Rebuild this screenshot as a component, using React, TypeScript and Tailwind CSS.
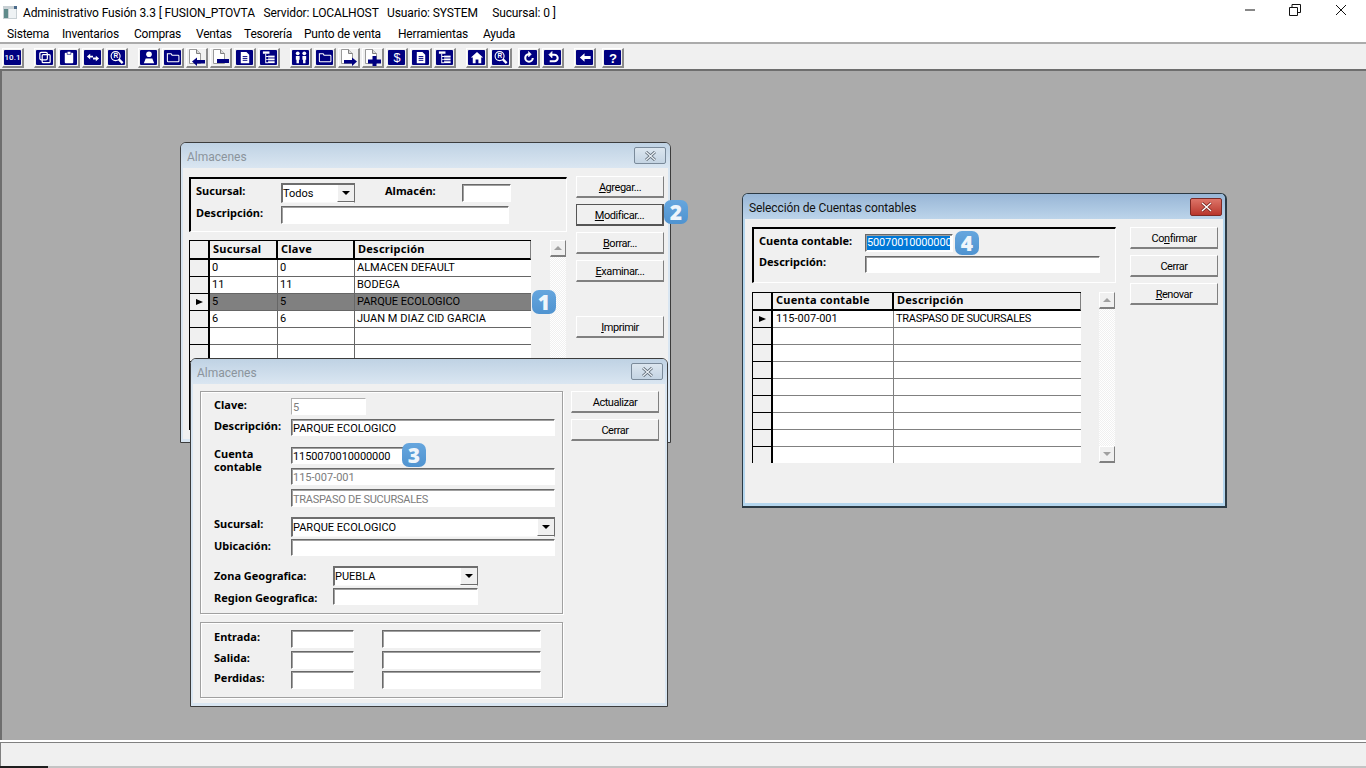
import React from "react";

// ─── Toolbar glyphs ─────────────────────────────────────────────────────────

const W = "#ffffff";
const N = "#000080";

function Page({ children }: { children?: React.ReactNode }) {
  return (
    <svg width="19" height="17" viewBox="0 0 19 17">
      <path d="M2.500 .5h7l4 4v10h-11z" fill="#fff" stroke="#9a9a9a" strokeWidth="1" />
      <path d="M9.500 .5v4h4" fill="#d8d8d8" stroke="#808080" />
      {children}
    </svg>
  );
}

const glyphs: Record<string, React.ReactNode> = {
  copy: (
    <g fill="none" stroke={W} strokeWidth="1.3">
      <rect x="2.500" y="2.500" width="8" height="8" rx="1.500" />
      <rect x="5" y="5" width="8.500" height="8.500" rx="1" />
    </g>
  ),
  clip: (
    <g fill={W}>
      <rect x="3.500" y="3" width="9" height="11" rx="1" />
      <rect x="6" y="1.500" width="4" height="3" fill={W} stroke={N} strokeWidth="0.6" />
    </g>
  ),
  swap: <path d="M1.500 7l3.500-3v2h3v2H5v2zM14.500 9l-3.500-3v2H8v2h3v2z" fill={W} />,
  search: (
    <g>
      <circle cx="6.500" cy="6.500" r="4.800" fill="none" stroke={W} strokeWidth="1.200" />
      <text x="4.300" y="9" fontSize="7" fontWeight="700" fill={W} fontFamily="Liberation Sans">R</text>
      <path d="M10 10l4 4" stroke={W} strokeWidth="2.400" />
    </g>
  ),
  person: (
    <g fill={W}>
      <circle cx="8" cy="4.500" r="3" />
      <path d="M2.500 14l2-5h7l2 5z" />
    </g>
  ),
  folder: <path d="M2 5.500V4h4l1 1.500h6.500a.8.8 0 01.8.8v5.400a.8.8 0 01-.8.8H2.800a.8.8 0 01-.8-.8z" fill="none" stroke={W} strokeWidth="1.100" />,
  doc: (
    <g>
      <path d="M3.500 2h6l3 3v9h-9z" fill={W} />
      <path d="M5.500 7h5M5.500 9h5M5.500 11h5" stroke={N} strokeWidth="1" />
    </g>
  ),
  tree: (
    <g fill={W}>
      <rect x="1.500" y="1.500" width="7" height="2.500" />
      <rect x="7" y="6" width="7" height="2" />
      <rect x="7" y="9" width="7" height="2" />
      <rect x="7" y="12" width="7" height="2" />
      <path d="M4 4h1v9h2v1H4zM5 6.500h2v1H5zM5 9.500h2v1H5z" />
    </g>
  ),
  people: (
    <g fill={W}>
      <circle cx="4.500" cy="3.500" r="2" />
      <circle cx="11.500" cy="3.500" r="2" />
      <path d="M2.500 6.500h4v4h-.7V14H3.200v-3.500h-.7zM9.500 6.500h4v4h-.7V14h-2.600v-3.500h-.7z" />
    </g>
  ),
  dollar: (
    <text x="8" y="13" textAnchor="middle" fontSize="13.500" fill={W} fontFamily="Liberation Sans">$</text>
  ),
  home: <path d="M8 2l6.500 6H12.500v6H9.500v-4h-3v4H3.500V8H1.500z" fill={W} />,
  redo: (
    <g fill="none" stroke={W} strokeWidth="2.200">
      <path d="M8 4.500a4 4 0 104 4" />
      <path d="M7.500 1.500v6l3-3z" fill={W} strokeWidth="0.6" />
    </g>
  ),
  undo: (
    <g fill="none" stroke={W} strokeWidth="2.200">
      <path d="M6 5h3.500a3.200 3.200 0 010 7H4.500" />
      <path d="M7 1.500v7l-3.500-3.500z" fill={W} strokeWidth="0.6" />
    </g>
  ),
  back: <path d="M2.500 8l5-4.500V6.500h6.500v3H7.500v3z" fill={W} />,
  help: (
    <text x="8" y="13.500" textAnchor="middle" fontSize="14" fontWeight="700" fill={W} fontFamily="Liberation Sans">?</text>
  ),
};

function ToolBtn({ icon }: { icon: string }) {
  return (
    <div className="flex h-[20px] w-[22px] items-center justify-center border-t border-l border-t-white border-l-white border-b-2 border-r-2 border-b-[#8a8a8a] border-r-[#8a8a8a]">
      {icon === "ten" ? (
        <span className="flex h-[15px] w-[17px] items-center justify-center rounded-[1px] bg-[#000080] text-[8px] font-medium leading-none text-white">10.1</span>
      ) : icon.startsWith("page") ? (
        <Page>
          {icon === "pageLeft" && <path d="M5 12.500l5-4v2.500h8v3.500h-8V17z" fill={N} />}
          {icon === "pageMinus" && <rect x="6" y="10" width="12" height="4" fill={N} />}
          {icon === "pageRight" && <path d="M18 12.500l-5-4v2.500H5v3.500h8V17z" fill={N} />}
          {icon === "pagePlus" && <path d="M9.500 7h4v3.500H18v4h-4.500V17h-4v-2.500H5v-4h4.500z" fill={N} />}
        </Page>
      ) : (
        <span className="flex h-[15px] w-[17px] items-center justify-center rounded-[1px] bg-[#000080]">
          <svg width="16" height="15" viewBox="0 0 16 16">{glyphs[icon]}</svg>
        </span>
      )}
    </div>
  );
}

function ToolGroup({ icons, className }: { icons: string[]; className: string }) {
  return (
    <div className={`flex gap-[2px] ${className}`}>
      {icons.map((ic, i) => (
        <ToolBtn key={i} icon={ic} />
      ))}
    </div>
  );
}

// ─── Win32 controls ─────────────────────────────────────────────────────────

function Field({ className, text, muted }: { className: string; text?: string; muted?: boolean }) {
  return (
    <div className={`overflow-hidden whitespace-nowrap border border-t-[#696969] border-l-[#696969] border-b-white border-r-white bg-white pl-[1px] pt-[1px] text-[11px] leading-[16px] shadow-[inset_1px_1px_0_#a0a0a0] ${muted ? "text-[#7c7c7c]" : "text-black"} ${className}`}>
      {text}
    </div>
  );
}

function Arrow() {
  return <span className="h-0 w-0 border-x-[4px] border-t-[4px] border-x-transparent border-t-black" />;
}

function Combo({ className, text }: { className: string; text: string }) {
  return (
    <div className={`flex items-stretch justify-between border-t-2 border-l-2 border-b border-r border-t-[#6e6e6e] border-l-[#6e6e6e] border-b-[#f8f8f8] border-r-[#6e6e6e] bg-white text-[11px] leading-[17px] ${className}`}>
      <span>{text}</span>
      <span className="flex w-[17px] items-center justify-center border-l border-l-white border-b border-b-[#6e6e6e] bg-[#f0f0f0]">
        <Arrow />
      </span>
    </div>
  );
}

function Btn({ children, dflt, className = "" }: { children: React.ReactNode; dflt?: boolean; className?: string }) {
  return (
    <div className={`flex h-[22px] w-[88px] items-center justify-center bg-[#f0f0f0] pt-[2px] text-[11px] leading-none tracking-[-0.45px] text-black ${dflt ? "border border-[#555] border-b-2 border-r-2" : "border-t border-l border-t-white border-l-white border-b-2 border-r border-b-[#808080] border-r-[#808080]"} ${className}`}>
      <span>{children}</span>
    </div>
  );
}

function Label({ children, className = "" }: { children: React.ReactNode; className?: string }) {
  return (
    <div className={`shrink-0 font-['Noto_Sans'] text-[11px] font-bold leading-[14px] text-black ${className}`}>
      {children}
    </div>
  );
}

function Badge({ n, className }: { n: string; className: string }) {
  return (
    <div className={`absolute flex h-[24px] w-[24px] items-center justify-center rounded-[7px] bg-gradient-to-b from-[#66a6de] to-[#4f93d0] font-['Open_Sans'] text-[21px] font-extrabold leading-none text-[#eef5fb] ${className}`}>
      {n}
    </div>
  );
}

function XIcon({ edge, fill }: { edge: string; fill: string }) {
  return (
    <svg width="13" height="10" viewBox="0 0 13 10">
      <path d="M2 1l9 8M11 1l-9 8" stroke={edge} strokeWidth="3" fill="none" />
      <path d="M2 1l9 8M11 1l-9 8" stroke={fill} strokeWidth="1.300" fill="none" />
    </svg>
  );
}

function Win({ className, title, active, closeClass, children }: {
  className: string;
  title: string;
  active?: boolean;
  closeClass: string;
  children: React.ReactNode;
}) {
  return (
    <div className={`absolute flex flex-col overflow-hidden rounded-t-[6px] border border-[#3c3c3c] ${active ? "bg-[#b4d6ee]" : "bg-[#d9e6f2]"} ${className}`}>
      <div className={`flex shrink-0 items-center justify-between pl-[6px] text-[12px] ${active ? "h-[25px] bg-gradient-to-b from-[#98b6d6] to-[#bcd4ea] text-[#111]" : "h-[25px] bg-gradient-to-b from-[#bfd2e4] to-[#dae6f1] text-[#8b949c]"}`}>
        <span className={`pt-[2px] ${active ? "tracking-[-0.1px]" : ""}`}>{title}</span>
        {active ? (
          <span className={`flex items-center justify-center rounded-[2px] border border-[#7c2a25] bg-gradient-to-b from-[#dd7468] to-[#b8352c] ${closeClass}`}>
            <XIcon edge="#7c2a25" fill="#ffffff" />
          </span>
        ) : (
          <span className={`flex items-center justify-center rounded-[2px] border border-[#7a8a9a] bg-gradient-to-b from-[#dce6ef] to-[#c4d4e3] ${closeClass}`}>
            <XIcon edge="#5f6b76" fill="#e8eef4" />
          </span>
        )}
      </div>
      <div className="mx-[2px] mb-[3px] flex flex-1 overflow-hidden bg-[#f0f0f0] text-black">{children}</div>
    </div>
  );
}

// ─── Grid ───────────────────────────────────────────────────────────────────

function Grid({ cols, widthClass, headH, headLeading, cellLeading, head, rows, total, selected, marker, lineClass, firstPad }: {
  cols: string;
  widthClass: string;
  headH: string;
  headLeading: string;
  cellLeading: string;
  head: string[];
  rows: React.ReactNode[][];
  total: number;
  selected?: number;
  marker: number;
  lineClass: string;
  firstPad?: boolean;
}) {
  return (
    <div className={`shrink-0 border-l border-black ${widthClass}`}>
      <div className={`grid border-t border-black ${cols} ${headH}`}>
        <div className="border-r-2 border-b-2 border-black bg-[#f0f0f0]" />
        {head.map((h, c) => (
          <div key={h} className={`border-b-2 border-black bg-[#f0f0f0] pl-[3px] font-['Noto_Sans'] text-[11px] font-bold tracking-[0.25px] ${headLeading} ${c === head.length - 1 ? "border-r border-r-[#808080]" : "border-r-2"}`}>
            {h}
          </div>
        ))}
      </div>
      {Array.from({ length: total }).map((_, r) => (
        <div key={r} className={`grid h-[17px] ${cols}`}>
          <div className="flex items-center justify-center border-r-2 border-b border-black bg-[#f0f0f0]">
            {r === marker && <span className="h-0 w-0 border-y-[3px] border-l-[7px] border-y-transparent border-l-black" />}
          </div>
          {head.map((_, c) => (
            <div key={c} className={`overflow-hidden whitespace-nowrap border-b text-[11px] ${cellLeading} ${c === 0 && firstPad ? "pl-[3px]" : "pl-[2px]"} ${c === head.length - 1 ? "" : "border-r"} ${lineClass} ${r === selected ? "bg-[#808080]" : "bg-white"}`}>
              {rows[r]?.[c]}
            </div>
          ))}
        </div>
      ))}
    </div>
  );
}

function ScrollBtn({ down }: { down?: boolean }) {
  return (
    <div className="flex h-[17px] w-[16px] items-center justify-center border-t border-l border-t-white border-l-white border-b-2 border-r border-b-[#808080] border-r-[#808080] bg-[#f0f0f0]">
      <span className={`h-0 w-0 border-x-[4px] border-x-transparent ${down ? "border-t-[4px] border-t-[#a0a0a0]" : "border-b-[4px] border-b-[#a0a0a0]"}`} />
    </div>
  );
}

function ScrollBar({ className }: { className: string }) {
  return (
    <div className={`flex w-[16px] shrink-0 flex-col justify-between bg-[repeating-conic-gradient(#f0f0f0_0_25%,#ffffff_0_50%)] bg-[length:2px_2px] ${className}`}>
      <ScrollBtn />
      <ScrollBtn down />
    </div>
  );
}

const etched = "border border-[#a0a0a0] shadow-[1px_1px_0_#fff,inset_1px_1px_0_#fff]";
const sunken = "border-t-2 border-l-2 border-b border-r border-t-black border-l-black border-b-white border-r-white";

// ─── Windows ────────────────────────────────────────────────────────────────

function AlmacenesList() {
  return (
    <Win className="left-[180px] top-[73px] h-[301px] w-[491px]" title="Almacenes" closeClass="mr-[4px] h-[17px] w-[32px]">
      <div className="ml-[6px] w-[378px] shrink-0 pt-[9px]">
        <div className={`h-[55px] ${sunken} pl-[5px] pt-[4px]`}>
          <div className="flex">
            <Label className="mt-[1px] w-[85px]">Sucursal:</Label>
            <Combo className="h-[20px] w-[74px]" text="Todos" />
            <Label className="ml-[30px] mt-[1px] w-[77px]">Almacén:</Label>
            <Field className="mt-[1px] h-[18px] w-[49px]" />
          </div>
          <div className="mt-[3px] flex">
            <Label className="w-[85px]">Descripción:</Label>
            <Field className="h-[18px] w-[228px]" />
          </div>
        </div>
        <div className="mt-[8px] flex">
          <Grid
            cols="grid-cols-[20px_68px_77px_176px]"
            widthClass="w-[342px]"
            headH="h-[20px]"
            headLeading="leading-[15px]"
            cellLeading="leading-[15px]"
            head={["Sucursal", "Clave", "Descripción"]}
            rows={[
              ["0", "0", "ALMACEN DEFAULT"],
              ["11", "11", "BODEGA"],
              ["5", "5", "PARQUE ECOLOGICO"],
              ["6", "6", "JUAN M DIAZ CID GARCIA"],
            ]}
            total={10}
            selected={2}
            marker={2}
            lineClass="border-[#666]"
          />
          <ScrollBar className="ml-[19px] h-[188px]" />
        </div>
      </div>
      <div className="ml-[9px] flex flex-col pt-[8px]">
        <Btn><u>A</u>gregar...</Btn>
        <Btn dflt className="mt-[6px]"><u>M</u>odificar...</Btn>
        <Btn className="mt-[6px]"><u>B</u>orrar...</Btn>
        <Btn className="mt-[6px]"><u>E</u>xaminar...</Btn>
        <Btn className="mt-[34px]"><u>I</u>mprimir</Btn>
      </div>
    </Win>
  );
}

function AlmacenesForm() {
  return (
    <Win className="left-[190px] top-[289px] h-[349px] w-[478px]" title="Almacenes" closeClass="mr-[4px] h-[17px] w-[32px]">
      <div className="ml-[7px] w-[363px] shrink-0 pt-[7px]">
        <div className={`h-[223px] ${etched} pl-[13px] pt-[6px]`}>
          <div className="flex h-[17px]">
            <Label className="w-[77px]">Clave:</Label>
            <Field muted className="h-[17px] w-[75px] !border-t-[#b0b0b0] !border-l-[#b0b0b0] !shadow-none" text="5" />
          </div>
          <div className="mt-[4px] flex h-[17px]">
            <Label className="w-[77px]">Descripción:</Label>
            <Field className="h-[17px] w-[264px]" text="PARQUE ECOLOGICO" />
          </div>
          <div className="mt-[11px] flex h-[17px]">
            <Label className="w-[77px] !leading-[13px]">Cuenta<br />contable</Label>
            <Field className="h-[17px] w-[114px] tracking-[-0.1px]" text="1150070010000000" />
          </div>
          <div className="mt-[4px] flex h-[17px]">
            <div className="w-[77px]" />
            <Field muted className="h-[17px] w-[264px]" text="115-007-001" />
          </div>
          <div className="mt-[4px] flex h-[18px]">
            <div className="w-[77px]" />
            <Field muted className="h-[18px] w-[264px] tracking-[-0.25px] !leading-[17px]" text="TRASPASO DE SUCURSALES" />
          </div>
          <div className="mt-[10px] flex h-[20px]">
            <Label className="w-[77px]">Sucursal:</Label>
            <Combo className="h-[20px] w-[264px]" text="PARQUE ECOLOGICO" />
          </div>
          <div className="mt-[2px] flex h-[17px]">
            <Label className="w-[77px]">Ubicación:</Label>
            <Field className="h-[17px] w-[264px]" />
          </div>
          <div className="mt-[10px] flex h-[20px]">
            <Label className="mt-[3px] w-[119px]">Zona Geografica:</Label>
            <Combo className="h-[20px] w-[145px]" text="PUEBLA" />
          </div>
          <div className="mt-[2px] flex h-[17px]">
            <Label className="mt-[3px] w-[119px]">Region Geografica:</Label>
            <Field className="h-[17px] w-[145px]" />
          </div>
        </div>
        <div className={`mt-[8px] h-[76px] ${etched} pl-[13px] pt-[7px]`}>
          <div className="flex h-[18px]">
            <Label className="w-[77px]">Entrada:</Label>
            <Field className="h-[18px] w-[63px]" />
            <Field className="ml-[28px] h-[18px] w-[159px]" />
          </div>
          <div className="mt-[3px] flex h-[18px]">
            <Label className="w-[77px]">Salida:</Label>
            <Field className="h-[18px] w-[63px]" />
            <Field className="ml-[28px] h-[18px] w-[159px]" />
          </div>
          <div className="mt-[2px] flex h-[18px]">
            <Label className="w-[77px]">Perdidas:</Label>
            <Field className="h-[18px] w-[63px]" />
            <Field className="ml-[28px] h-[18px] w-[159px]" />
          </div>
        </div>
      </div>
      <div className="ml-[8px] flex flex-col pt-[7px]">
        <Btn>Actualizar</Btn>
        <Btn className="mt-[6px]">Cerrar</Btn>
      </div>
    </Win>
  );
}

function CuentasWin() {
  return (
    <Win active className="left-[742px] top-[124px] h-[315px] w-[485px] !border-[#2c3a44] border-b-2 border-r-2" title="Selección de Cuentas contables" closeClass="mr-[3px] h-[18px] w-[32px]">
      <div className="ml-[7px] w-[364px] shrink-0 pt-[8px]">
        <div className={`h-[56px] ${sunken} pl-[5px] pt-[5px]`}>
          <div className="flex h-[18px]">
            <Label className="w-[106px]">Cuenta contable:</Label>
            <div className="h-[18px] w-[88px] overflow-hidden whitespace-nowrap border border-t-[#696969] border-l-[#696969] border-b-white border-r-white bg-white pl-[1px] pt-[1px] pr-[2px] text-[11px] leading-[14px] shadow-[inset_1px_1px_0_#a0a0a0]">
              <span className="block overflow-hidden bg-[#0078d7] tracking-[-0.15px] text-white">5007001000000000</span>
            </div>
          </div>
          <div className="mt-[4px] flex h-[17px]">
            <Label className="-mt-[1px] w-[106px]">Descripción:</Label>
            <Field className="h-[17px] w-[235px]" />
          </div>
        </div>
        <div className="mt-[9px] flex">
          <Grid
            cols="grid-cols-[20px_121px_187px]"
            widthClass="h-[171px] w-[329px] overflow-hidden"
            headH="h-[19px]"
            headLeading="leading-[14px]"
            cellLeading="leading-[15px]"
            head={["Cuenta contable", "Descripción"]}
            rows={[["115-007-001", <span className="tracking-[-0.25px]">TRASPASO DE SUCURSALES</span>]]}
            total={9}
            marker={0}
            lineClass="border-[#808080]"
            firstPad
          />
          <ScrollBar className="ml-[18px] h-[171px]" />
        </div>
      </div>
      <div className="ml-[14px] flex flex-col pt-[8px]">
        <Btn>Co<u>n</u>firmar</Btn>
        <Btn className="mt-[6px]">Cerrar</Btn>
        <Btn className="mt-[6px]"><u>R</u>enovar</Btn>
      </div>
    </Win>
  );
}

// ─── App ────────────────────────────────────────────────────────────────────

const menus = [
  { label: "Sistema", width: "w-[41px]" },
  { label: "Inventarios", width: "w-[58px]" },
  { label: "Compras", width: "w-[48px]" },
  { label: "Ventas", width: "w-[34px]" },
  { label: "Tesorería", width: "w-[46px]" },
  { label: "Punto de venta", width: "w-[80px]" },
  { label: "Herramientas", width: "w-[71px]" },
  { label: "Ayuda", width: "w-[34px]" },
];

export default function App() {
  return (
    <div className="flex h-[768px] w-[1366px] flex-col overflow-hidden bg-white font-['Roboto',sans-serif] text-black">
      {/* title bar */}
      <div className="flex h-[25px] shrink-0 items-center pl-[3px] text-[12px]">
        <svg width="14" height="13" viewBox="0 0 14 13" className="mr-[6px]">
          <rect width="14" height="13" fill="#c8d0d4" />
          <rect x="1" y="3" width="4" height="9" fill="#5f8a8a" />
          <rect x="6" y="3" width="7" height="9" fill="#eef2f4" />
          <rect x="11" y="0" width="3" height="3" fill="#4a6a8a" />
        </svg>
        <span className="whitespace-pre tracking-[-0.12px]">Administrativo Fusión 3.3 [ FUSION_PTOVTA   Servidor: LOCALHOST   Usuario: SYSTEM     Sucursal: 0 ]</span>
        <div className="-mt-[5px] ml-auto flex items-center">
          <svg width="12" height="12" viewBox="0 0 12 12" className="mr-[33px]"><path d="M1 6h10" stroke="#111" /></svg>
          <svg width="12" height="12" viewBox="0 0 12 12" className="mr-[34px]"><path d="M.5 3.500h8v8h-8zM3 3V.5h8.500v8H9" fill="none" stroke="#111" /></svg>
          <svg width="12" height="12" viewBox="0 0 12 12" className="mr-[19px]"><path d="M1 1l10 10M11 1L1 11" stroke="#111" /></svg>
        </div>
      </div>
      {/* menu */}
      <div className="flex h-[17px] shrink-0 items-center gap-[14px] pl-[7px] text-[12px]">
        {menus.map((m) => (
          <span key={m.label} className={`whitespace-nowrap tracking-[-0.2px] ${m.width}`}>{m.label}</span>
        ))}
      </div>
      {/* toolbar */}
      <div className="h-[2px] shrink-0 bg-[#ababab]" />
      <div className="flex h-[25px] shrink-0 bg-[#f0f0f0] pl-[2px] pt-[4px]">
        <ToolGroup className="" icons={["ten"]} />
        <ToolGroup className="ml-[10px]" icons={["copy", "clip", "swap", "search"]} />
        <ToolGroup className="ml-[10px]" icons={["person", "folder", "pageLeft", "pageMinus", "doc", "tree"]} />
        <ToolGroup className="ml-[10px]" icons={["people", "folder", "pageRight", "pagePlus", "dollar", "doc", "tree"]} />
        <ToolGroup className="ml-[10px]" icons={["home", "search"]} />
        <ToolGroup className="ml-[6px]" icons={["redo", "undo"]} />
        <ToolGroup className="ml-[10px]" icons={["back"]} />
        <ToolGroup className="ml-[6px]" icons={["help"]} />
      </div>
      {/* MDI area */}
      <div className="relative h-[671px] shrink-0 bg-[#ababab] shadow-[inset_2px_2px_0_#6e6e6e]">
        <AlmacenesList />
        <AlmacenesForm />
        <CuentasWin />
        <Badge n="1" className="left-[532px] top-[221px]" />
        <Badge n="2" className="left-[664px] top-[131px]" />
        <Badge n="3" className="left-[402px] top-[374px]" />
        <Badge n="4" className="left-[955px] top-[162px]" />
      </div>
      {/* status bar */}
      <div className="h-[2px] shrink-0 bg-white" />
      <div className="h-[24px] shrink-0 border-t border-l border-[#808080] bg-[#f0f0f0]" />
      <div className="flex flex-1">
        <div className="w-[48px] bg-[#1f1f1f]" />
        <div className="flex-1 bg-[#c4c4c4]" />
      </div>
    </div>
  );
}
